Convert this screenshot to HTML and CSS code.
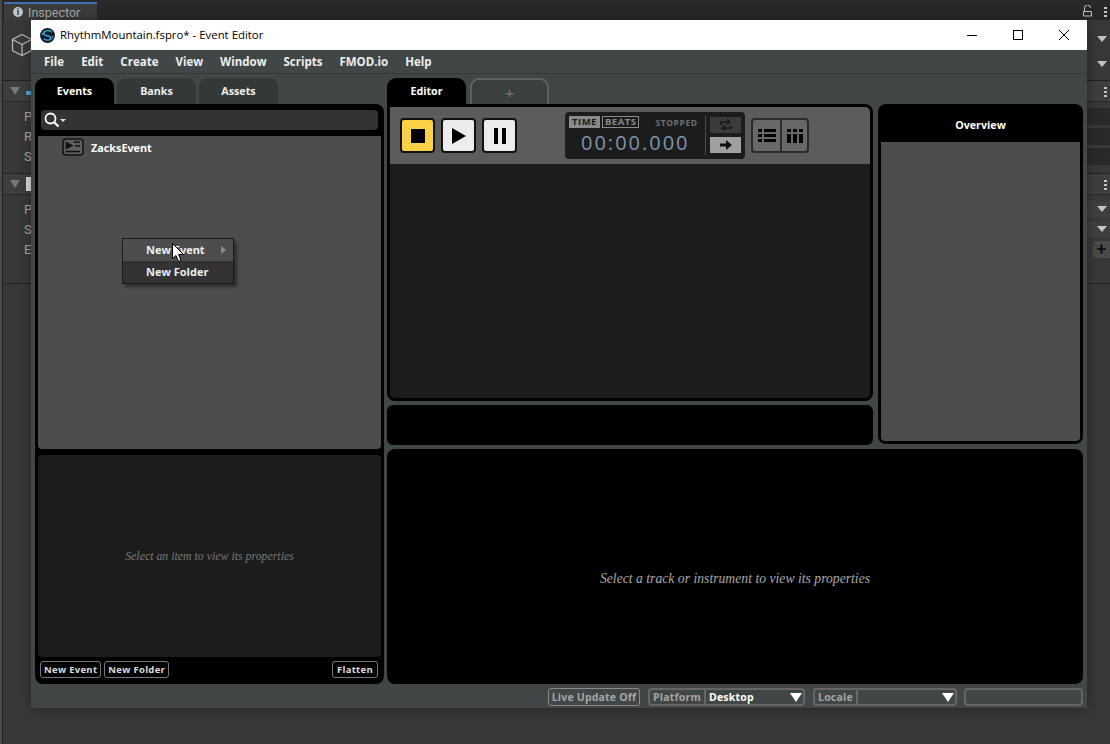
FILE: index.html
```html
<!DOCTYPE html>
<html lang="en">
<head>
    <meta charset="UTF-8">
    <title>RhythmMountain.fspro* - Event Editor</title>
    <link rel="stylesheet" href="styles.css">
</head>
<body>
    <!-- Unity inspector sitting behind the FMOD window -->
    <div class="unity">
        <div class="unity-tabs">
            <div class="unity-tab"><span class="info-dot">i</span>Inspector</div>
            <div class="unity-tab-tools">
                <svg width="10" height="12" viewBox="0 0 10 12"><path d="M1.500 6V3a3 3 0 0 1 6 0M.5 6.500h8v4.500h-8z" fill="none" stroke="#c4c4c4"/></svg>
                <span class="dots"></span>
            </div>
        </div>
        <div class="object-head">
            <svg class="cube" width="22" height="24" viewBox="0 0 22 24"><path d="M11 1.500l9.500 5v11l-9.500 5-9.500-5v-11zM1.500 6.500l9.500 5 9.500-5M11 11.500v11" fill="none" stroke="#b4b4b4" stroke-width="1.300"/></svg>
            <div class="head-arrows"><span class="tri"></span><span class="tri"></span></div>
        </div>
        <div class="comp-head"><span class="tri-left"></span><i class="comp-icon blue"></i><span class="dots"></span></div>
        <div class="comp-body first">
            <div class="prop"><span>P</span><i class="field dark"></i></div>
            <div class="prop"><span>R</span><i class="field dark"></i></div>
            <div class="prop"><span>S</span><i class="field dark"></i></div>
        </div>
        <div class="comp-head"><span class="tri-left"></span><i class="comp-icon white"></i><span class="dots"></span></div>
        <div class="comp-body second">
            <div class="prop"><span>P</span><i class="field"><b class="tri"></b></i></div>
            <div class="prop"><span>S</span><i class="field"><b class="tri"></b></i></div>
            <div class="prop"><span>E</span><i class="plus">+</i></div>
        </div>
    </div>

    <div class="window">
        <div class="titlebar">
            <svg class="logo" width="15" height="15" viewBox="0 0 16 16"><circle cx="8" cy="8" r="8" fill="#0d1c26"/><path d="M12.500 4.500C10 1.500 4.500 2.500 4 6c-.4 3 7.500 1.500 7.500 4.500 0 2.500-4.500 3.500-7.500 1" fill="none" stroke="#45a5cf" stroke-width="1.500"/><path d="M2 8a6 6 0 0 1 3-5M14 8a6 6 0 0 1-3 5" fill="none" stroke="#45a5cf"/></svg>
            <span class="title">RhythmMountain.fspro* - Event Editor</span>
            <div class="win-buttons">
                <svg width="12" height="12" viewBox="0 0 12 12"><path d="M1 6.500h10" stroke="#000"/></svg>
                <svg width="12" height="12" viewBox="0 0 12 12"><rect x="1.500" y="1.500" width="9" height="9" fill="none" stroke="#000"/></svg>
                <svg width="12" height="12" viewBox="0 0 12 12"><path d="M1 1l10 10M11 1L1 11" stroke="#000"/></svg>
            </div>
        </div>

        <div class="menubar">
            <span>File</span><span>Edit</span><span>Create</span><span>View</span><span>Window</span><span>Scripts</span><span>FMOD.io</span><span>Help</span>
        </div>

        <div class="main">
            <div class="left-col">
                <div class="tabs">
                    <div class="tab active">Events</div>
                    <div class="tab">Banks</div>
                    <div class="tab">Assets</div>
                </div>
                <div class="browser">
                    <div class="search">
                        <svg width="22" height="16" viewBox="0 0 22 16"><circle cx="6.500" cy="6.500" r="5" fill="none" stroke="#fff" stroke-width="1.800"/><path d="M10 10l4.500 4.500" stroke="#fff" stroke-width="2.200"/><path d="M16 7h6l-3 3z" fill="#ddd"/></svg>
                    </div>
                    <div class="list">
                        <div class="event-row">
                            <svg width="22" height="18" viewBox="0 0 22 18"><rect x="1" y="1" width="20" height="16" rx="3" fill="#5d5d5d" stroke="#111" stroke-width="1.500"/><path d="M3.500 3.500l8 4-8 4z" fill="#111"/><path d="M12 4h6M13 8h5M3.500 13.500h14.500" stroke="#111" stroke-width="1.500"/></svg>
                            <span>ZacksEvent</span>
                        </div>
                    </div>
                    <div class="props">
                        <em>Select an item to view its properties</em>
                    </div>
                    <div class="browser-foot">
                        <span class="small-btn">New Event</span>
                        <span class="small-btn">New Folder</span>
                        <span class="small-btn flatten">Flatten</span>
                    </div>
                </div>
            </div>

            <div class="right-col">
                <div class="tabs">
                    <div class="tab active">Editor</div>
                    <div class="tab add">+</div>
                </div>
                <div class="editor-grid">
                    <div class="editor">
                        <div class="transport">
                            <div class="t-btn stop"><i></i></div>
                            <div class="t-btn"><svg width="20" height="20" viewBox="0 0 20 20"><path d="M3 2l14 8-14 8z" fill="#000"/></svg></div>
                            <div class="t-btn"><svg width="14" height="16" viewBox="0 0 14 16"><path d="M1 0h4v16H1zM9 0h4v16H9z" fill="#000"/></svg></div>
                            <div class="clock">
                                <div class="clock-main">
                                    <div class="clock-top">
                                        <span class="mode on">TIME</span>
                                        <span class="mode">BEATS</span>
                                        <span class="state">STOPPED</span>
                                    </div>
                                    <div class="digits">00:00.000</div>
                                </div>
                                <div class="clock-side">
                                    <span class="side-btn"><svg width="14" height="12" viewBox="0 0 14 12"><path d="M2 6V3h8M8 .5L11 3 8 5.500M12 6v3H4M6 6.500L3 9l3 2.500" fill="none" stroke="#1a1a1a" stroke-width="1.600"/></svg></span>
                                    <span class="side-btn on"><svg width="14" height="10" viewBox="0 0 14 10"><path d="M1 3.500h6V0l6 5-6 5V6.500H1z" fill="#111"/></svg></span>
                                </div>
                            </div>
                            <div class="views">
                                <span><svg width="18" height="13" viewBox="0 0 18 13"><path d="M0 0h4v3H0zM6 0h12v3H6zM0 5h4v3H0zM6 5h12v3H6zM0 10h4v3H0zM6 10h12v3H6z" fill="#000"/></svg></span>
                                <span><svg width="16" height="14" viewBox="0 0 16 14"><path d="M0 0h4v3H0zM6 0h4v3H6zM12 0h4v3h-4zM0 5h4v9H0zM6 5h4v9H6zM12 5h4v9h-4z" fill="#000"/></svg></span>
                            </div>
                        </div>
                        <div class="timeline"></div>
                    </div>
                    <div class="overview">
                        <div class="overview-head">Overview</div>
                        <div class="overview-body"></div>
                    </div>
                    <div class="strip"></div>
                    <div class="deck">
                        <em>Select a track or instrument to view its properties</em>
                    </div>
                </div>
            </div>
        </div>

        <div class="statusbar">
            <span class="live">Live Update Off</span>
            <div class="combo platform"><label>Platform</label><span>Desktop</span><b class="tri-white"></b></div>
            <div class="combo locale"><label>Locale</label><span></span><b class="tri-white"></b></div>
            <div class="combo blank"></div>
        </div>

        <div class="context-menu">
            <div class="menu-item hover">New Event<i class="sub-arrow"></i></div>
            <div class="menu-item">New Folder</div>
        </div>
        <svg class="cursor" width="12" height="19" viewBox="0 0 12 19"><path d="M.5.500v15l3.500-3 2.500 6 2.500-1-2.500-6h5z" fill="#fff" stroke="#000"/></svg>
    </div>
</body>
</html>
```

FILE: styles.css
```css
* {
    box-sizing: border-box;
}

html, body {
    height: 100%;
}

body {
    margin: 0;
    overflow: hidden;
    background-color: #4c4844;
    font-family: 'Open Sans', 'Noto Sans', sans-serif;
    position: relative;
}

/* background editor */
.unity {
    height: 744px;
    margin-left: 2px;
    border-left: 1px solid #232323;
    background-color: #383838;
    color: #b4b4b4;
    font-family: 'Roboto', sans-serif;
    font-size: 13px;
}

.unity-tabs {
    height: 20px;
    padding: 2px 0 0 1px;
    background-color: #282828;
    display: flex;
    justify-content: space-between;
}

.unity-tab {
    width: 93px;
    background-color: #3c3c3c;
    border-top: 2px solid #3a72b0;
    display: flex;
    align-items: center;
    gap: 5px;
    padding-left: 9px;
    font-size: 12.500px;
    color: #a8a8a8;
}

.info-dot {
    width: 10px;
    height: 10px;
    border-radius: 50%;
    background-color: #c4c4c4;
    color: #333;
    font-size: 9px;
    font-weight: bold;
    line-height: 10px;
    text-align: center;
}

.unity-tab-tools {
    display: flex;
    align-items: center;
    gap: 11px;
}

.dots {
    width: 3px;
    height: 11px;
    margin-right: 3px;
    background: radial-gradient(circle, #c4c4c4 1.400px, transparent 1.500px) 0 0 / 3px 4px;
}

.object-head {
    height: 61px;
    border-bottom: 1px solid #232323;
    padding: 13px 0 0 8px;
    display: flex;
    justify-content: space-between;
}

.head-arrows {
    display: flex;
    flex-direction: column;
    gap: 19px;
    padding: 3px 3px 0 0;
}

.tri {
    display: block;
    width: 0;
    height: 0;
    border-left: 5px solid transparent;
    border-right: 5px solid transparent;
    border-top: 6px solid #c4c4c4;
}

.comp-head {
    height: 20px;
    background-color: #3e3e3e;
    display: flex;
    align-items: center;
    padding-left: 7px;
}

.comp-head .dots {
    margin-left: auto;
}

.tri-left {
    width: 0;
    height: 0;
    border-left: 5px solid transparent;
    border-right: 5px solid transparent;
    border-top: 8px solid #777;
}

.comp-icon {
    width: 8px;
    height: 14px;
    margin-left: 6px;
}

.comp-icon.blue {
    height: 4px;
    margin-top: 4px;
    background-color: #4fa3d8;
}

.comp-icon.white {
    background-color: #dcdcdc;
}

.comp-body {
    border-bottom: 1px solid #232323;
    border-top: 1px solid #2a2a2a;
}

.comp-body.first {
    height: 73px;
    padding-top: 4px;
}

.comp-body.second {
    height: 90px;
    padding-top: 4px;
}

.prop {
    height: 20px;
    display: flex;
    justify-content: space-between;
    padding-left: 21px;
    color: #a8a8a8;
    align-items: center;
}

.field {
    width: 40px;
    height: 17px;
    background-color: #3f3f3f;
    display: flex;
    align-items: center;
    justify-content: flex-end;
    padding-right: 3px;
}

.field.dark {
    background-color: #2a2a2a;
}

.plus {
    width: 17px;
    height: 17px;
    background-color: #4a4a4a;
    border-radius: 3px 0 0 3px;
    color: #111;
    font-style: normal;
    font-weight: bold;
    font-size: 17px;
    line-height: 16px;
    text-align: center;
}

/* FMOD window */
.window {
    position: absolute;
    left: 31px;
    top: 20px;
    width: 1056px;
    height: 688px;
    background-color: #414747;
    box-shadow: 0 0 12px rgba(0, 0, 0, 0.35);
    display: flex;
    flex-direction: column;
}

.titlebar {
    height: 30px;
    flex: none;
    background-color: #fff;
    display: flex;
    align-items: center;
    padding-left: 9px;
    color: #000;
    font-size: 11.400px;
}

.title {
    margin: 0 0 1px 5px;
}

.win-buttons {
    margin-left: auto;
    display: flex;
    gap: 34px;
    padding-right: 17px;
}

.menubar {
    height: 24px;
    flex: none;
    border-bottom: 1px solid #333838;
    display: flex;
    align-items: center;
    gap: 17px;
    padding-left: 13px;
    color: #eee;
    font-size: 11.500px;
    font-weight: bold;
}

.main {
    height: 606px;
    flex: none;
    margin-top: 4px;
    padding: 0 4px;
    display: grid;
    grid-template-columns: 349px 696px;
    gap: 3px;
}

.left-col, .right-col {
    display: flex;
    flex-direction: column;
}

.tabs {
    height: 26px;
    flex: none;
    display: flex;
    gap: 3px;
}

.tab {
    width: 79px;
    border-radius: 9px 9px 0 0;
    background-color: #333939;
    color: #eee;
    font-size: 10.700px;
    font-weight: bold;
    text-align: center;
    line-height: 26px;
}

.tab.active {
    background-color: #000;
    color: #fff;
}

.tab.add {
    margin-left: 1px;
    border: 2px solid #5c6161;
    border-bottom: none;
    background-color: #3a4040;
    color: #6d7171;
    font-size: 15px;
}

.browser {
    flex: 1;
    background-color: #000;
    border-radius: 0 8px 8px 8px;
    padding: 6px 3px 0;
    display: flex;
    flex-direction: column;
}

.search {
    height: 20px;
    flex: none;
    margin: 0 3px 6px;
    border-radius: 4px;
    background-color: #333;
    padding: 2px 0 0 3px;
    display: flex;
}

.list {
    height: 313px;
    flex: none;
    background-color: #4d4d4d;
    border-radius: 0 0 4px 4px;
}

.event-row {
    display: flex;
    align-items: center;
    gap: 7px;
    padding: 2px 0 0 24px;
    color: #fff;
    font-size: 10.800px;
    font-weight: bold;
}

.props {
    height: 202px;
    flex: none;
    margin-top: 6px;
    background-color: #1c1c1c;
    border-radius: 4px;
    display: flex;
    align-items: center;
    justify-content: center;
    color: #777;
    font-family: 'Liberation Serif', serif;
    font-size: 11.850px;
}

.browser-foot {
    flex: 1;
    display: flex;
    align-items: flex-start;
    gap: 3px;
    padding: 4px 3px 0 2px;
}

.small-btn {
    height: 17px;
    border: 1px solid #777;
    border-radius: 3px;
    padding: 0 3px;
    color: #ddd;
    font-size: 9.500px;
    font-weight: bold;
    letter-spacing: 0.3px;
    line-height: 15px;
}

.flatten {
    margin-left: auto;
    padding: 0 4px;
}

.editor-grid {
    flex: 1;
    display: grid;
    grid-template-columns: 486px 205px;
    grid-template-rows: 297px 40px 1fr;
    column-gap: 5px;
    row-gap: 4px;
}

.editor {
    background-color: #000;
    border-radius: 0 8px 8px 8px;
    padding: 3px;
    display: flex;
    flex-direction: column;
}

.transport {
    height: 57px;
    flex: none;
    background-color: #5c5c5c;
    border-radius: 0 5px 0 0;
    display: flex;
    align-items: flex-start;
    padding: 11px 0 0 10px;
    gap: 6px;
}

.t-btn {
    width: 35px;
    height: 35px;
    border: 2px solid #111;
    border-radius: 4px;
    background-color: #ececec;
    display: flex;
    align-items: center;
    justify-content: center;
}

.t-btn.stop {
    background-color: #fdd145;
}

.t-btn.stop i {
    width: 14px;
    height: 14px;
    background-color: #000;
}

.clock {
    width: 180px;
    height: 47px;
    margin: -6px 0 0 42px;
    border-radius: 4px;
    background-color: #1c1c1c;
    display: flex;
    padding: 4px 4px 0 4px;
}

.clock-main {
    width: 137px;
    border-right: 1px solid #4a4a4a;
    height: 39px;
}

.clock-top {
    display: flex;
    align-items: center;
    gap: 2px;
    height: 12px;
    font-size: 9.500px;
    font-weight: bold;
}

.mode {
    height: 12px;
    border: 1px solid #8a8a8a;
    padding: 0 2px;
    color: #8a8a8a;
    line-height: 10px;
    letter-spacing: 0.500px;
}

.mode.on {
    background-color: #8a8a8a;
    color: #1c1c1c;
}

.state {
    margin-left: 14px;
    color: #6f6f6f;
    font-size: 8.500px;
    letter-spacing: 0.600px;
}

.digits {
    margin: 3px 0 0 12px;
    color: #7c95ad;
    font-size: 20px;
    line-height: 24px;
    letter-spacing: 2px;
}

.clock-side {
    margin-left: 4px;
    display: flex;
    flex-direction: column;
    gap: 4px;
    padding-top: 1px;
}

.side-btn {
    width: 31px;
    height: 16px;
    background-color: #3b3b3b;
    display: flex;
    align-items: center;
    justify-content: center;
}

.side-btn.on {
    background-color: #a0a0a0;
}

.views {
    display: flex;
    height: 35px;
    border-radius: 4px;
    border: 2px solid #2b2b2b;
    background-color: #686868;
}

.views span {
    width: 27px;
    display: flex;
    align-items: center;
    justify-content: center;
}

.views span + span {
    border-left: 2px solid #2b2b2b;
}

.timeline {
    flex: 1;
    background-color: #1c1c1c;
    border-radius: 0 0 5px 5px;
}

.overview {
    grid-row: span 2;
    background-color: #000;
    border-radius: 8px;
    padding: 0 3px 3px;
    display: flex;
    flex-direction: column;
    margin-bottom: 1px;
}

.overview-head {
    height: 38px;
    flex: none;
    color: #fff;
    font-size: 10.700px;
    font-weight: bold;
    text-align: center;
    line-height: 42px;
}

.overview-body {
    flex: 1;
    background-color: #4d4d4d;
    border-radius: 0 0 4px 4px;
}

.strip {
    background-color: #000;
    border-radius: 6px;
}

.deck {
    grid-column: span 2;
    background-color: #000;
    border-radius: 8px;
    display: flex;
    align-items: center;
    justify-content: center;
    padding-top: 24px;
    color: #a8a8a8;
    font-family: 'Liberation Serif', serif;
    font-size: 13.700px;
}

.statusbar {
    flex: 1;
    display: flex;
    align-items: flex-start;
    padding: 4px 4px 0 517px;
    color: #a5a5a5;
    font-size: 10.500px;
    font-weight: bold;
    letter-spacing: 0.2px;
}

.live {
    width: 92px;
    height: 18px;
    border: 1px solid #8a8a8a;
    border-radius: 3px;
    text-align: center;
    line-height: 16px;
}

.combo {
    height: 18px;
    border: 2px solid #666;
    border-radius: 4px;
    display: flex;
    align-items: center;
    position: relative;
}

.combo label {
    height: 100%;
    padding: 0 3px;
    border-right: 2px solid #666;
    line-height: 14px;
}

.combo span {
    padding-left: 3px;
    color: #fff;
}

.platform {
    width: 157px;
    margin-left: 8px;
}

.locale {
    width: 144px;
    margin-left: 8px;
}

.blank {
    width: 119px;
    margin-left: 7px;
}

.tri-white {
    position: absolute;
    right: 1px;
    top: 3px;
    width: 0;
    height: 0;
    border-left: 6px solid transparent;
    border-right: 6px solid transparent;
    border-top: 9px solid #fff;
}

/* right click menu */
.context-menu {
    position: absolute;
    left: 91px;
    top: 218px;
    width: 112px;
    height: 46px;
    border: 1px solid #1a1a1a;
    background-color: #333;
    box-shadow: 3px 3px 3px rgba(0, 0, 0, 0.4);
}

.menu-item {
    height: 22px;
    padding-left: 23px;
    color: #eee;
    font-size: 11px;
    font-weight: bold;
    line-height: 22px;
    position: relative;
}

.menu-item.hover {
    background-color: #4d4d4d;
}

.sub-arrow {
    position: absolute;
    right: 7px;
    top: 7px;
    width: 0;
    height: 0;
    border-top: 4px solid transparent;
    border-bottom: 4px solid transparent;
    border-left: 5px solid #888;
}

.cursor {
    position: absolute;
    left: 141px;
    top: 223px;
}
```
